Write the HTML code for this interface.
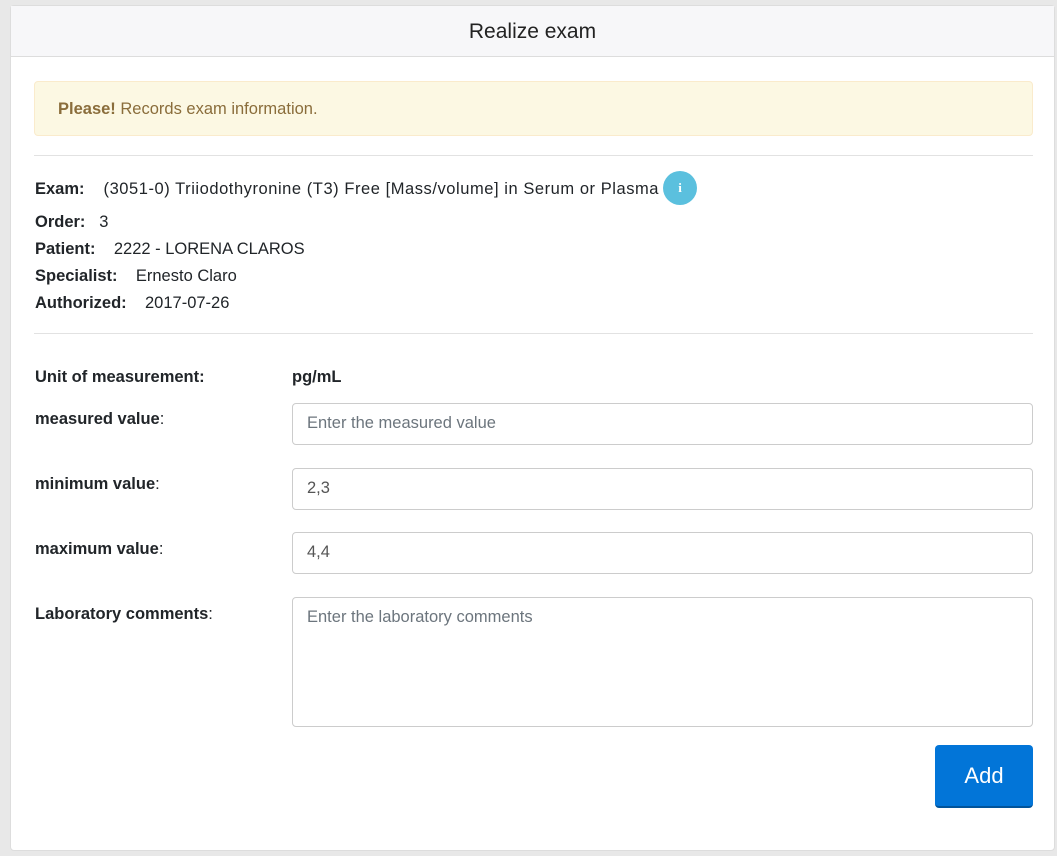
<!DOCTYPE html>
<html><head><style>
body{margin:0;width:1057px;height:856px;background:#e8e8e8;font-family:"Liberation Sans",sans-serif;color:#212529;position:relative;overflow:hidden}
.card{position:absolute;left:10px;top:5px;width:1043px;height:844px;background:#fff;border:1px solid #ddd;border-radius:4px}
.hdr{position:absolute;left:0;top:0;width:1043px;height:50px;background:#f7f7f9;border-bottom:1px solid #ddd;text-align:center;line-height:52px;font-size:21px;color:#222}
.a{position:absolute;font-size:16.5px;white-space:nowrap}
.alert{position:absolute;left:23px;top:75px;height:55px;background:#fcf8e3;border:1px solid #faebcc;border-radius:4px;color:#8a6d3b;font-size:16.5px;line-height:55px;box-sizing:border-box;padding-left:23px;width:999px}
.hr{position:absolute;left:23px;width:999px;height:1px;background:#e2e2e2}
.inp{position:absolute;left:281px;width:741px;height:42px;border:1px solid #ccc;border-radius:4px;box-sizing:border-box;padding:10px 14px;font-size:16.5px;color:#555}
.ph{color:#6c757d}
b{font-weight:bold}
.ic{display:inline-block;vertical-align:middle;margin-left:4px;margin-top:-4px;width:34px;height:34px;border-radius:50%;background:#5bc0de;color:#fff;font:bold 13px 'Liberation Serif',serif;text-align:center;line-height:34px;letter-spacing:0}
</style></head><body>
<div class="card">
<div class="hdr">Realize exam</div>
<div class="alert"><b>Please!</b> Records exam information.</div>
<div class="hr" style="top:149px"></div>
<div class="a" style="left:24px;top:166px;line-height:34px"><b>Exam:</b><span style="margin-left:19px;letter-spacing:0.55px">(3051-0) Triiodothyronine (T3) Free [Mass/volume] in Serum or Plasma</span><span class="ic">i</span></div>
<div class="a" style="left:24px;top:207px"><b>Order:</b>&nbsp;&nbsp; 3</div>
<div class="a" style="left:24px;top:234px"><b>Patient:</b>&nbsp;&nbsp;&nbsp; 2222 - LORENA CLAROS</div>
<div class="a" style="left:24px;top:261px"><b>Specialist:</b>&nbsp;&nbsp;&nbsp; Ernesto Claro</div>
<div class="a" style="left:24px;top:288px"><b>Authorized:</b>&nbsp;&nbsp;&nbsp; 2017-07-26</div>
<div class="hr" style="top:327px"></div>
<div class="a" style="left:24px;top:362px"><b>Unit of measurement:</b></div>
<div class="a" style="left:281px;top:362px"><b>pg/mL</b></div>
<div class="a" style="left:24px;top:404px"><b>measured value</b>:</div>
<div class="inp" style="top:397px"><span class="ph">Enter the measured value</span></div>
<div class="a" style="left:24px;top:469px"><b>minimum value</b>:</div>
<div class="inp" style="top:462px">2,3</div>
<div class="a" style="left:24px;top:534px"><b>maximum value</b>:</div>
<div class="inp" style="top:526px">4,4</div>
<div class="a" style="left:24px;top:599px"><b>Laboratory comments</b>:</div>
<div class="inp" style="top:591px;height:130px"><span class="ph">Enter the laboratory comments</span></div>
<div style="position:absolute;left:924px;top:739px;width:98px;height:63px;background:#0275d8;border-radius:4px;border-bottom:2px solid #01549b;box-sizing:border-box;color:#fff;font-size:22px;text-align:center;line-height:62px">Add</div>
</div>
</body></html>
